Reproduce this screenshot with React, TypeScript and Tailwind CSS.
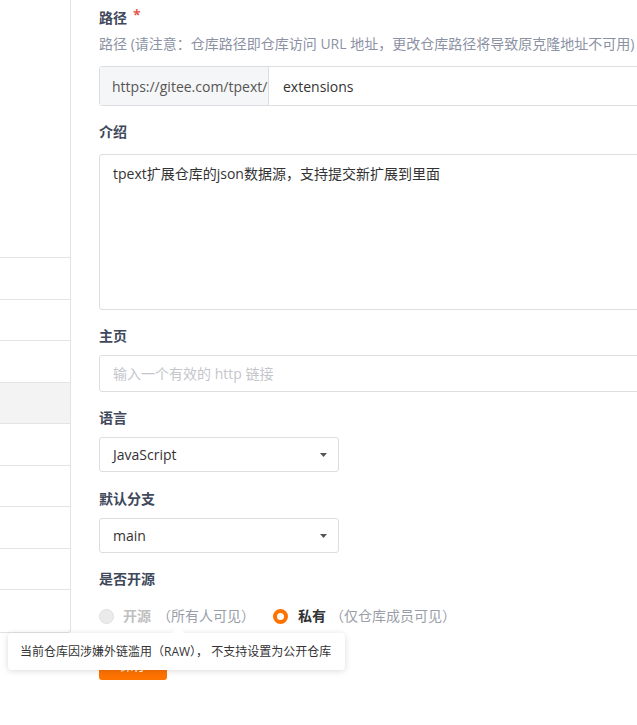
import React from "react";

const FONT = '"Open Sans", "Noto Sans CJK SC", sans-serif';

function Label({ children, required }: { children: React.ReactNode; required?: boolean }) {
  return (
    <div className="h-5 flex items-center text-[14px] font-bold text-[#40485b] leading-5">
      <span>{children}</span>
      {required && <span className="ml-[6px] text-[#e5574b] relative top-[-3px]">*</span>}
    </div>
  );
}

function Caret() {
  return (
    <svg width="7" height="4" viewBox="0 0 7 4" className="shrink-0">
      <path d="M0 0 L7 0 L3.5 4 Z" fill="#555" />
    </svg>
  );
}

export default function App() {
  const rows = [0, 1, 2, 3, 4, 5, 6, 7, 8];
  return (
    <div
      className="relative flex w-[637px] h-[725px] overflow-hidden bg-white text-[#40485b]"
      style={{ fontFamily: FONT }}
    >
      {/* sidebar */}
      <aside className="w-[71px] shrink-0 self-start border-r border-b border-[#e3e3e3] rounded-br-[3px] flex flex-col">
        <div className="h-[258px] border-b border-[#e3e3e3]" />
        {rows.map((i) => (
          <div
            key={i}
            className={
              (i === 3 ? "bg-[#f3f3f3] " : "") +
              (i < 8 ? "border-b border-[#e3e3e3] " : "") +
              "h-[41.5px]"
            }
          />
        ))}
      </aside>

      {/* main */}
      <main className="ml-[28px] w-[600px] shrink-0 flex flex-col pt-[8px]">
        <Label required>路径</Label>
        <div className="mt-[6px] h-5 leading-5 text-[14px] text-[#8c92a4] whitespace-nowrap">
          路径 (请注意：仓库路径即仓库访问 URL 地址，更改仓库路径将导致原克隆地址不可用)
        </div>
        <div className="mt-[12px] flex h-[40px] border border-[#dcdde0] rounded-[3px] text-[14px]">
          <div className="w-[169px] shrink-0 bg-[#f5f6f7] border-r border-[#dcdde0] flex items-center pl-[12px] text-[#555]">
            https://gitee.com/tpext/
          </div>
          <div className="flex items-center pl-[14px] text-[#333]">extensions</div>
        </div>

        <div className="mt-[16px]">
          <Label>介绍</Label>
        </div>
        <div className="mt-[12px] h-[156px] border border-[#dcdde0] rounded-[3px] px-[13px] pt-[9px] text-[14px] text-[#333] leading-5">
          tpext扩展仓库的json数据源，支持提交新扩展到里面
        </div>

        <div className="mt-[16px]">
          <Label>主页</Label>
        </div>
        <div className="mt-[9px] h-[37px] border border-[#dcdde0] rounded-[3px] flex items-center px-[13px] text-[14px] text-[#c4c6cc]">
          输入一个有效的 http 链接
        </div>

        <div className="mt-[16px]">
          <Label>语言</Label>
        </div>
        <div className="mt-[9px] w-[240px] h-[35px] border border-[#dcdde0] rounded-[3px] flex items-center justify-between pl-[13px] pr-[11px] text-[14px] text-[#333]">
          <span>JavaScript</span>
          <Caret />
        </div>

        <div className="mt-[17px]">
          <Label>默认分支</Label>
        </div>
        <div className="mt-[9px] w-[240px] h-[35px] border border-[#dcdde0] rounded-[3px] flex items-center justify-between pl-[13px] pr-[11px] text-[14px] text-[#333]">
          <span>main</span>
          <Caret />
        </div>

        <div className="mt-[16px]">
          <Label>是否开源</Label>
        </div>
        <div className="mt-[17px] flex items-center h-5 text-[14px] leading-5 whitespace-nowrap">
          <span className="w-[15px] h-[15px] rounded-full bg-[#ebebeb] border border-[#e0e0e0]" />
          <span className="ml-[9px] font-bold text-[#c0c0c0]">开源</span>
          <span className="ml-[6px] text-[#9a9ea8]">（所有人可见）</span>
          <span className="ml-[18px] w-[15px] h-[15px] rounded-full border-[4px] border-[#fe7300] bg-white" />
          <span className="ml-[10px] font-bold text-[#333]">私有</span>
          <span className="ml-[4px] text-[#9a9ea8]">（仅仓库成员可见）</span>
        </div>
        <div className="mt-[22px] w-[68px] h-[32px] rounded-[3px] bg-[#fe7300] text-white text-[14px] flex items-center justify-center">
          保存
        </div>
      </main>

      {/* tooltip */}
      <div className="absolute left-[8px] top-[633px] w-[337px] h-[37px] bg-white rounded-[4px] shadow-[0_1px_6px_rgba(0,0,0,0.15)] flex items-center pl-[12px] text-[12px] text-[#333] whitespace-nowrap">
        当前仓库因涉嫌外链滥用（RAW）， 不支持设置为公开仓库
        <span className="absolute left-[164px] top-[-6px] w-0 h-0 border-l-[6px] border-r-[6px] border-b-[6px] border-l-transparent border-r-transparent border-b-white" />
      </div>
    </div>
  );
}
